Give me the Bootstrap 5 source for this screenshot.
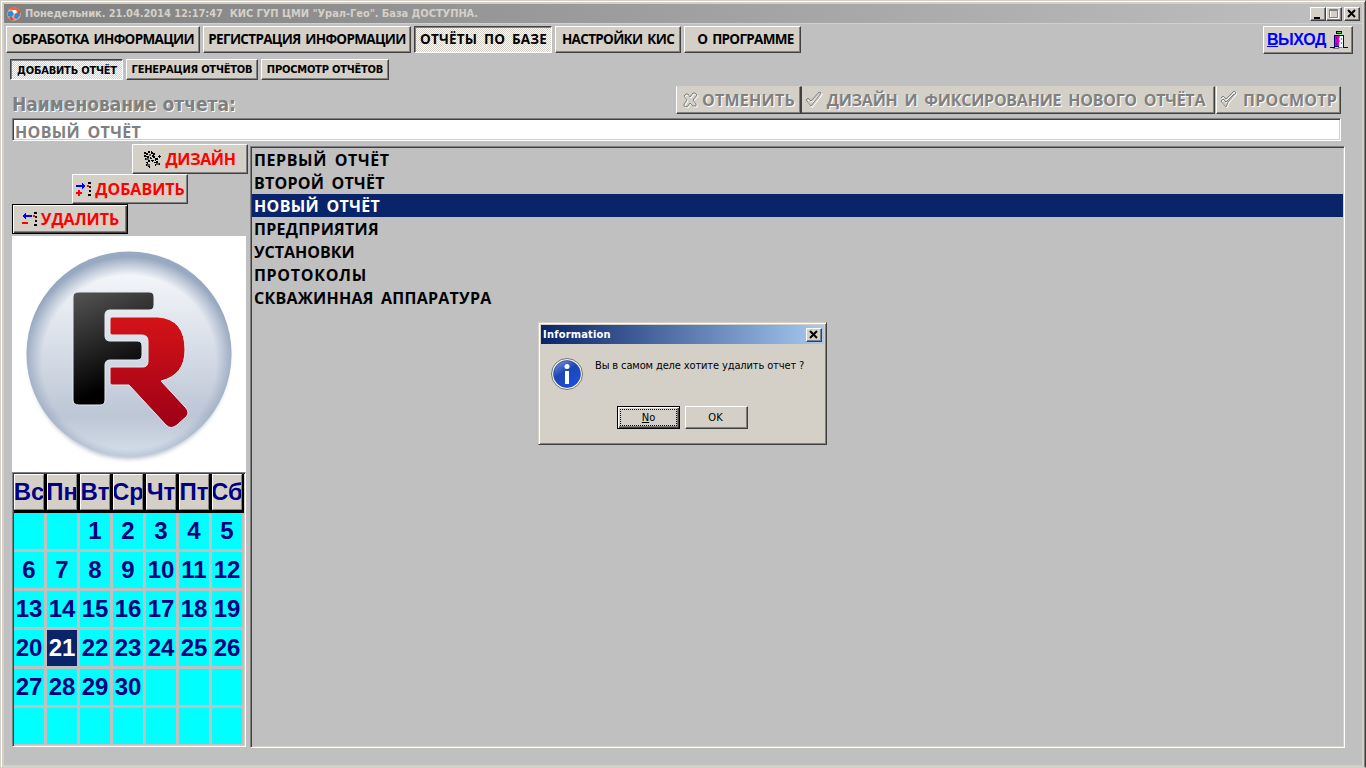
<!DOCTYPE html>
<html lang="ru">
<head>
<meta charset="utf-8">
<meta name="viewport" content="width=device-width, initial-scale=1">
<title>КИС ГУП ЦМИ "Урал-Гео"</title>
<link href="https://cdn.jsdelivr.net/npm/bootstrap@5.3.0/dist/css/bootstrap.min.css" rel="stylesheet">
<style>
:root{--face:#d4d0c8;--desk:#c0c0c0;--navy:#0a246a;--sh:#808080;--dk:#404040}
*{border-radius:0!important}
body{margin:0;width:1366px;height:768px;overflow:hidden;background:var(--face);font-family:"DejaVu Sans Condensed","DejaVu Sans",sans-serif;font-size:11px;line-height:1;color:#000}
.win{width:1366px;height:768px;padding:3px 2px 3px 3px;border:1px solid;border-color:var(--face) var(--dk) var(--face) var(--face);box-shadow:inset 1px 1px #fff,inset -1px 0 var(--sh);background:var(--face)}
.client{height:741px;background:var(--desk);width:1358px;padding-left:2px}
.titlebar{height:19px;width:1358px;background:linear-gradient(90deg,#808080,#c0c0c0);color:var(--face);font-weight:700;margin-bottom:1px;padding:0 2px 0 2px}
.titlebar .ttl{white-space:pre;letter-spacing:-.06px;margin-left:3px}
.capbtn{width:16px;height:14px;background:var(--face);padding:0;border:1px solid;border-color:#fff var(--dk) var(--dk) #fff;box-shadow:inset -1px -1px var(--sh);display:block}
.capbtn svg{display:block}
.btn.rz{--bs-btn-line-height:1;padding:0;background:var(--face);border:1px solid;border-color:#fff var(--dk) var(--dk) #fff;box-shadow:inset -1px -1px var(--sh);color:#000;font-weight:700;white-space:nowrap;display:flex;align-items:center;justify-content:center;flex:none;line-height:1}
.btn.rz.down{border-color:var(--dk) #fff #fff var(--dk);box-shadow:inset 1px 1px var(--sh);background:repeating-conic-gradient(#fff 0 25%,var(--face) 0 50%) 0 0/2px 2px;padding:1px 0 0 1px}
.btn.rz.def{border-color:#000;box-shadow:inset 1px 1px #fff,inset -1px -1px var(--dk),inset -2px -2px var(--sh)}
.comic{font-family:"Open Sans","Noto Sans",sans-serif;font-weight:700;font-size:16px;word-spacing:3px;white-space:nowrap}
.tabs1 .btn{height:27px}
.tabs1 .comic{font-size:13.5px;word-spacing:2px;letter-spacing:-.67px}
.tabs1 .down .comic{letter-spacing:.2px;word-spacing:3px}
.tabs1 .exit{height:28px;color:#00f;font:700 16px "Liberation Sans",Arial,sans-serif;letter-spacing:-.4px}
.tabs2 .btn{height:21px;font-size:11px;letter-spacing:-.2px}
.off{color:#808080!important;text-shadow:1px 1px #fff}
.flat .btn{height:28px;border-top-color:var(--face)}
.flat .comic{letter-spacing:.25px}
.flat .long{letter-spacing:-.25px}
.side .btn{width:116px;height:30px}
.side .comic{color:#f00}
.sunk{border:1px solid;border-color:var(--sh) #fff #fff var(--sh);box-shadow:inset 1px 1px var(--dk),inset -1px -1px var(--face)}
.field{height:23px;width:1329px;background:#fff;color:#808080;padding:5px 0 0 2px;margin-left:6px;margin-top:4px}
.field .comic{line-height:16px;letter-spacing:.33px}
.report-list{width:1095px;height:602px;padding:1px}
.report-list .list-group-item{height:23px;padding:4px 0 0 2px;border:0;background:transparent;color:#000;line-height:16px;font-size:16px;letter-spacing:.25px}
.report-list .list-group-item.active{background:var(--navy);color:#fff;margin:0;letter-spacing:.33px}
.report-list .wide1{letter-spacing:.6px}
.report-list .wide2{letter-spacing:.7px}
.cal{width:234px;height:275px;background:var(--desk);padding:1px 2px 1px 1px}
.cal .days{display:grid;grid-template-columns:repeat(7,30px);gap:3px;font:700 24px/36px "Liberation Sans",Arial,sans-serif;color:#000080;text-align:center}
.cal .hd{background:#000;height:39px;width:230px;overflow:hidden}
.cal .hd div{background:var(--face);height:36px;border:1px solid;border-color:#fff var(--sh) var(--sh) #fff;line-height:33px;overflow:hidden;white-space:nowrap;display:flex;justify-content:center}
.cal .bd div{background:#0ff;height:36px}
.cal .bd div.sel{background:var(--navy);color:#fff}
.logo{width:234px;height:236px;background:#fff;margin-top:2px}
.dlg{left:538px;top:322px;width:289px;height:123px;background:var(--face);border:1px solid;border-color:var(--face) var(--dk) var(--dk) var(--face);box-shadow:inset 1px 1px #fff,inset -1px -1px var(--sh);padding:2px}
.dlg .cap{height:19px;background:linear-gradient(90deg,#0a246a,#a6caf0);color:#fff;font-weight:700;padding:0 2px;letter-spacing:.2px}
.dlg .msg{margin:2px 0 0 12px;letter-spacing:-.13px}
.dlg .btn{width:63px;height:23px;font-weight:400;font-size:11px}
.dot{width:55px;height:15px;outline:1px dotted #000;display:flex;align-items:center;justify-content:center}
</style>
</head>
<body>
<div class="win">
  <header class="titlebar d-flex align-items-center">
    <svg width="16" height="16" viewBox="0 0 16 16"><circle cx="8" cy="8" r="6.8" fill="#e9a08a"/><path d="M3 3Q8-1 13 3L10 6 6 4z" fill="#f4643c"/><path d="M2 6l4-1 2 3-3 3-3-1zM9 8l4-2 1 3-3 4-3-1z" fill="#2a8bd8"/><path d="M6 4l4 0 1 2-3 2z" fill="#fff"/><path d="M3 11l3 0 2 3-3 0zM11 3l3 2 0 3-2-1z" fill="#e34a2a"/></svg>
    <span class="ttl me-auto">Понедельник. 21.04.2014 12:17:47  КИС ГУП ЦМИ "Урал-Гео". База ДОСТУПНА.</span>
    <div class="d-flex">
      <span class="capbtn"><svg width="14" height="12"><path d="M3 9h6v2H3z"/></svg></span>
      <span class="capbtn"><svg width="14" height="12"><path d="M3.500 2.500h8v8h-8z" fill="none" stroke="#fff"/><path d="M2.500 1.500h8v8h-8zM2 2.500h9" fill="none" stroke="#808080"/></svg></span>
      <span class="capbtn" style="margin-left:2px"><svg width="14" height="12"><path d="M3 2l7 7M10 2l-7 7" stroke="#000" stroke-width="2"/></svg></span>
    </div>
  </header>
  <main class="client">
    <nav class="tabs1 d-flex" style="padding-top:2px;gap:3px">
      <button class="btn rz" style="width:194px"><span class="comic">ОБРАБОТКА ИНФОРМАЦИИ</span></button>
      <button class="btn rz" style="width:208px"><span class="comic">РЕГИСТРАЦИЯ ИНФОРМАЦИИ</span></button>
      <button class="btn rz down" style="width:138px"><span class="comic">ОТЧЁТЫ ПО БАЗЕ</span></button>
      <button class="btn rz" style="width:126px"><span class="comic">НАСТРОЙКИ КИС</span></button>
      <button class="btn rz" style="width:117px"><span class="comic" style="margin-left:6px">О ПРОГРАММЕ</span></button>
      <button class="btn rz exit ms-auto" style="width:90px;margin-right:9px"><span><u>В</u>ЫХОД</span>
        <svg width="18" height="20" viewBox="0 0 18 20" style="margin:0 1px 0 4px" shape-rendering="crispEdges"><path d="M6 1h6v3H6z" fill="#000"/><path d="M7 2h4v1H7z" fill="#0f0"/><path d="M4 5h10v12H4z" fill="#000080"/><path d="M5 6h4v10H5z" fill="#d800c8"/><path d="M9 6h4v11H9z" fill="#e8ffff"/><path d="M9 6h1v2H9zM11 8h1v2h-1zM9 10h1v2H9zM11 12h1v2h-1z" fill="#0cc"/><path d="M6 7h1v2H6zM7 10h1v2H7zM6 13h1v2H6z" fill="#800080"/><path d="M0 17h5v1H0zM13 17h5v1h-5z" fill="#000080"/><path d="M3 18h6v1H3zM8 17h4v1H8z" fill="#808080"/></svg></button>
    </nav>
    <nav class="tabs2 d-flex" style="padding:5px 0 0 4px;gap:3px">
      <button class="btn rz down" style="width:113px"><span>ДОБАВИТЬ ОТЧЁТ</span></button>
      <button class="btn rz" style="width:132px"><span>ГЕНЕРАЦИЯ ОТЧЁТОВ</span></button>
      <button class="btn rz" style="width:128px"><span>ПРОСМОТР ОТЧЁТОВ</span></button>
    </nav>
    <div class="d-flex flat" style="padding-top:6px">
      <div class="off fw-bold me-auto" style="font-size:19px;padding:9px 0 0 6px">Наименование отчета:</div>
      <button class="btn rz" style="width:125px"><svg width="16" height="18" viewBox="0 0 16 18" fill="none" style="margin-right:4px"><path d="M2 5l2-2 2 0 2 3 3-4 2 0 2 2-4 5 3 4 0 2-3 0-3-3-3 4-3-1 0-2 3-4z" stroke="#fff" transform="translate(1 1)"/><path d="M2 5l2-2 2 0 2 3 3-4 2 0 2 2-4 5 3 4 0 2-3 0-3-3-3 4-3-1 0-2 3-4z" stroke="#808080"/></svg><span class="comic off">ОТМЕНИТЬ</span></button>
      <button class="btn rz" style="width:414px;padding-right:6px;border-left-color:var(--dk)"><svg width="18" height="18" viewBox="0 0 18 18" fill="none" style="margin-right:4px"><path d="M2 10l2-2 3 3 8-9 2 1L7 16z" stroke="#fff" transform="translate(.5 .5)"/><path d="M1 9l2-2 3 3 8-9 2 1L6 15z" stroke="#808080"/></svg><span class="comic off long">ДИЗАЙН И ФИКСИРОВАНИЕ НОВОГО ОТЧЁТА</span></button>
      <button class="btn rz" style="width:125px;margin:0 21px 0 1px"><svg width="18" height="20" viewBox="0 0 18 20" fill="none" style="margin-right:5px"><path d="M2 9l2-2 3 3 8-8 2 2-8 9L7 18 2 12l2-2 3 3 8-8" stroke="#fff"/><path d="M1 8l2-2 3 3 8-8 2 2-8 9L6 17 1 11l2-2 3 3 8-8" stroke="#808080"/></svg><span class="comic off">ПРОСМОТР</span></button>
    </div>
    <div class="field sunk"><span class="comic d-block">НОВЫЙ ОТЧЁТ</span></div>
    <div class="d-flex" style="padding-left:6px">
      <aside class="side" style="width:238px;padding-top:3px">
        <button class="btn rz" style="margin-left:120px"><svg width="17" height="17" viewBox="0 0 17 17" shape-rendering="crispEdges" style="margin-right:4px"><g fill="none" stroke="#000" stroke-width="2" stroke-dasharray="2 1"><circle cx="6" cy="4" r="3"/><path d="M1 1v5M1 8l4 2-3 3 4 3M10 2v4l3 4-2 5M16 5l-3 3v3l3 3M8 9l2 3"/></g><path d="M5 3h2v2H5zM2 7h3v2H2zM3 13h3v2H3zM12 12h3v2h-3z" fill="#555"/></svg><span class="comic" style="letter-spacing:-.35px">ДИЗАЙН</span></button>
        <button class="btn rz" style="margin-left:60px"><svg width="17" height="17" viewBox="0 0 17 17" shape-rendering="crispEdges" style="margin-right:3px"><path d="M1 4h6V2l4 3-4 3V6H1z" fill="#00f"/><path d="M1 11h6v2H1zM3 9h2v6H3z" fill="#f00"/><path d="M12 4h2v2h-2z" fill="#f00"/><path d="M13 1h3v2h-3zM14 5h2v2h-2zM14 9h2v2h-2zM13 13h3v2h-3z"/></svg><span class="comic">ДОБАВИТЬ</span></button>
        <button class="btn rz def"><svg width="17" height="17" viewBox="0 0 17 17" shape-rendering="crispEdges" style="margin-right:3px"><path d="M11 4H5V2L1 5l4 3V6h6z" fill="#00f"/><path d="M1 11h6v2H1z" fill="#f00"/><path d="M12 4h2v2h-2z" fill="#f00"/><path d="M13 1h3v2h-3zM14 5h2v2h-2zM14 9h2v2h-2zM13 13h3v2h-3z"/></svg><span class="comic">УДАЛИТЬ</span></button>
        <div class="logo">
          <svg width="234" height="236" viewBox="0 0 234 236">
            <defs>
              <linearGradient id="g1" x1="0" y1="0" x2="0" y2="1"><stop offset="0" stop-color="#fbfcfe"/><stop offset=".45" stop-color="#d9dfe9"/><stop offset=".8" stop-color="#bcc6d5"/><stop offset="1" stop-color="#d5deea"/></linearGradient>
              <radialGradient id="g2" cx=".5" cy=".54" r=".53"><stop offset=".8" stop-color="#93a4bd" stop-opacity="0"/><stop offset=".97" stop-color="#93a4bd" stop-opacity=".95"/></radialGradient>
              <linearGradient id="g3" x1="0" y1="0" x2=".3" y2="1"><stop offset="0" stop-color="#555"/><stop offset=".9" stop-color="#000"/></linearGradient>
              <linearGradient id="g4" x1="0" y1="0" x2="0" y2="1"><stop offset="0" stop-color="#d41318"/><stop offset="1" stop-color="#9d0017"/></linearGradient>
              <filter id="bl"><feGaussianBlur stdDeviation="2"/></filter>
            </defs>
            <ellipse cx="117" cy="121" rx="100" ry="102" fill="#8b98ac" opacity=".6" filter="url(#bl)"/>
            <circle cx="117" cy="118" r="102.500" fill="url(#g1)"/><circle cx="117" cy="118" r="102.500" fill="url(#g2)"/>
            <path d="M67 56h70q5 0 5 5v8q0 5-5 5H98q-5 0-5 5v21q0 5 5 5h27q5 0 5 5v9q0 5-5 5H98q-5 0-5 5v35q0 5-5 5H67q-6 0-6-5V61q0-5 6-5z" fill="url(#g3)" stroke="#e6ebf1" stroke-width="1"/>
            <path d="M100 81h46q27 2 27 33 0 25-24 31l25 27q4 5 0 9l-9 8q-6 5-11 0l-37-40h-17q-2 0-2-2v-15q0-1 2-1h31q5 0 5-6v-20q0-6-6-6h-30q-2 0-2-2V83q0-2 2-2z" fill="url(#g4)" stroke="#e6ebf1" stroke-width="1"/>
          </svg>
        </div>
        <div class="cal sunk">
          <div class="days hd"><div>Вс</div><div>Пн</div><div>Вт</div><div>Ср</div><div>Чт</div><div>Пт</div><div>Сб</div></div>
          <div class="days bd"><div></div><div></div><div>1</div><div>2</div><div>3</div><div>4</div><div>5</div><div>6</div><div>7</div><div>8</div><div>9</div><div>10</div><div>11</div><div>12</div><div>13</div><div>14</div><div>15</div><div>16</div><div>17</div><div>18</div><div>19</div><div>20</div><div class="sel">21</div><div>22</div><div>23</div><div>24</div><div>25</div><div>26</div><div>27</div><div>28</div><div>29</div><div>30</div><div></div><div></div><div></div><div></div><div></div><div></div><div></div><div></div><div></div><div></div></div>
        </div>
      </aside>
      <section class="report-list sunk" style="margin-top:5px">
        <ul class="list-group comic">
          <li class="list-group-item wide1">ПЕРВЫЙ ОТЧЁТ</li>
          <li class="list-group-item">ВТОРОЙ ОТЧЁТ</li>
          <li class="list-group-item active">НОВЫЙ ОТЧЁТ</li>
          <li class="list-group-item">ПРЕДПРИЯТИЯ</li>
          <li class="list-group-item" style="letter-spacing:0">УСТАНОВКИ</li>
          <li class="list-group-item wide2">ПРОТОКОЛЫ</li>
          <li class="list-group-item">СКВАЖИННАЯ АППАРАТУРА</li>
        </ul>
      </section>
    </div>
  </main>
</div>
<div class="dlg position-absolute" role="dialog">
  <div class="cap d-flex align-items-center"><span class="me-auto">Information</span><span class="capbtn"><svg width="14" height="12"><path d="M3 2l7 7M10 2l-7 7" stroke="#000" stroke-width="2"/></svg></span></div>
  <div class="d-flex" style="padding:14px 0 0 10px">
    <svg width="32" height="32" viewBox="0 0 32 32"><defs><linearGradient id="g5" x1="0" y1="0" x2=".6" y2="1"><stop offset="0" stop-color="#7d9be0"/><stop offset=".5" stop-color="#1d46b4"/><stop offset="1" stop-color="#1a4fe0"/></linearGradient></defs><circle cx="16" cy="16" r="15.500" fill="#f4f4f4" stroke="#777"/><circle cx="16" cy="16" r="13.500" fill="url(#g5)" stroke="#223a80" stroke-width=".6"/><circle cx="16" cy="8.500" r="2.500" fill="#fff"/><path d="M14 13h4v13h-4z" fill="#fff"/></svg>
    <span class="msg">Вы в самом деле хотите удалить отчет ?</span>
  </div>
  <div class="d-flex" style="padding:16px 0 0 76px;gap:5px">
    <button class="btn rz def"><span class="dot"><span><u>N</u>o</span></span></button>
    <button class="btn rz" style="padding-right:2px">OK</button>
  </div>
</div>
<script src="https://cdn.jsdelivr.net/npm/bootstrap@5.3.0/dist/js/bootstrap.bundle.min.js"></script>
</body>
</html>
